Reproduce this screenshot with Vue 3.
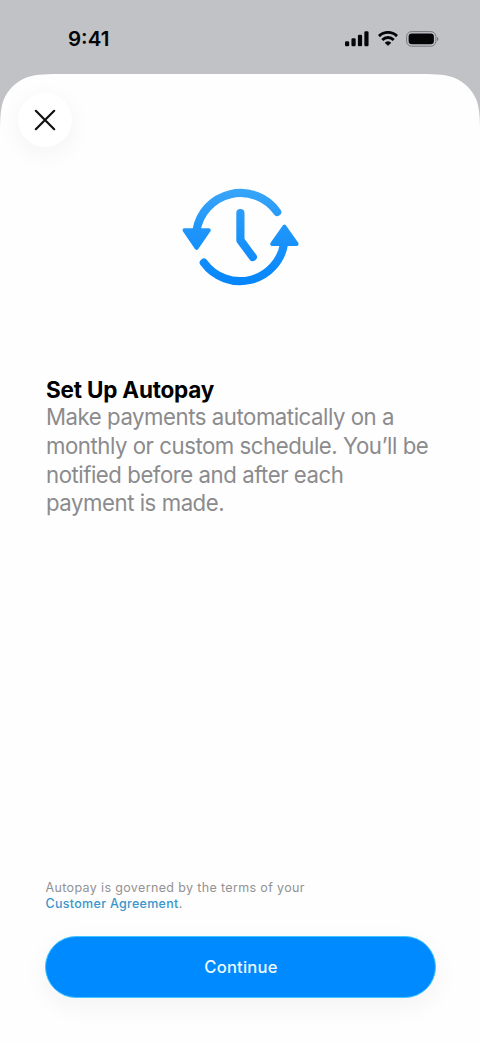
<script setup>
const bars = [5, 8, 11.5, 15]
</script>

<template>
  <main class="screen">
    <header class="status">
      <span class="time">9:41</span>
      <div class="indicators">
        <svg class="signal" width="24" height="16" viewBox="0 0 24 16">
          <rect v-for="(h, i) in bars" :key="h" :x="i * 6.45" :y="15.3 - h" width="4.2" :height="h" rx="1.3" />
        </svg>
        <svg class="wifi" width="20" height="15" viewBox="0 0 20 15">
          <g fill="none" stroke="#050507" stroke-width="2.9">
            <path d="M1 5.1a12.8 12.8 0 0 1 18 0" />
            <path d="M4.3 8.9a8 8 0 0 1 11.4 0" />
          </g>
          <path d="M7 11.7q3-2.3 6 0L10 14.6Z" fill="#050507" stroke="#050507" stroke-width=".5" stroke-linejoin="round" />
        </svg>
        <svg class="battery" width="34" height="16" viewBox="0 0 34 16">
          <rect x=".6" y=".6" width="29.3" height="14.6" rx="5" fill="none" stroke="#77777b" stroke-width="1" />
          <rect x="2.6" y="2.5" width="25.3" height="10.8" rx="3.3" />
          <path d="M31 5.9q1.4.7 1.4 2t-1.4 2Z" fill="#77777b" />
        </svg>
      </div>
    </header>

    <section class="sheet">
      <button class="close" aria-label="Close">
        <svg width="22" height="22" viewBox="0 0 22 22">
          <path d="M1.8 1.8 20.2 20.2M20.2 1.8 1.8 20.2" fill="none" stroke="#111" stroke-width="2.2" stroke-linecap="round" />
        </svg>
      </button>

      <svg class="hero" width="120" height="100" viewBox="180 187 120 100">
        <defs>
          <linearGradient id="blue" gradientUnits="userSpaceOnUse" x1="240" y1="188" x2="240" y2="286">
            <stop offset="0" stop-color="#38a5f8" />
            <stop offset=".5" stop-color="#1b93fa" />
            <stop offset="1" stop-color="#0585fb" />
          </linearGradient>
        </defs>
        <g fill="none" stroke="url(#blue)" stroke-width="8.2" stroke-linecap="round" stroke-linejoin="round">
          <path d="M277.2 212A44.7 44.7 0 0 0 196.4 231" />
          <path d="M203.8 262.7A44.7 44.7 0 0 0 284.2 243" />
          <path d="M240.4 213V240.3L252.8 257" />
        </g>
        <g fill="url(#blue)" stroke="url(#blue)" stroke-width="4" stroke-linejoin="round">
          <path d="M184.5 230.2H208.8L196.6 247.8Z" />
          <path d="M272.2 244H296.6L284.4 226.6Z" />
        </g>
      </svg>

      <div class="copy">
        <h1>Set Up Autopay</h1>
        <p>
          Make payments automatically on a<br>
          monthly or custom schedule. You’ll be<br>
          notified before and after each<br>
          payment is made.
        </p>
      </div>

      <footer>
        <p class="legal">Autopay is governed by the terms of your<br><a>Customer Agreement</a>.</p>
        <button class="continue">Continue</button>
      </footer>
    </section>
  </main>
</template>

<style>
body { background: #c1c2c6; }
</style>

<style scoped>
* { box-sizing: border-box; }
.screen {
  width: 480px;
  height: 1043px;
  display: flex;
  flex-direction: column;
  overflow: hidden;
  background: #c1c2c6;
  font-family: Inter, "Liberation Sans", sans-serif;
}
.status {
  height: 74px;
  flex: none;
  display: flex;
  justify-content: space-between;
  padding: 26px 40px 0 68px;
}
.time { font-size: 20.5px; line-height: 26px; font-weight: 600; letter-spacing: 0; color: #050507; }
.indicators { display: flex; align-items: flex-start; padding-top: 5px; fill: #050507; }
.wifi { margin-left: 9px; }
.battery { margin-left: 8px; }
.sheet {
  flex: 1;
  display: flex;
  flex-direction: column;
  background: #fefefe;
  /* continuous-curvature top corners */
  clip-path: path("M0 969V65.7C0 46.8 0 37.3 3.2 27.1C7.3 16 16 7.3 27.1 3.2C37.3 0 46.8 0 65.7 0H414.3C433.2 0 442.7 0 452.9 3.2C464 7.3 472.7 16 476.8 27.1C480 37.3 480 46.8 480 65.7V969Z");
}
button { border: 0; font-family: inherit; }
.close {
  width: 54px;
  height: 54px;
  margin: 19px 0 0 18px;
  padding: 0;
  flex: none;
  display: grid;
  place-items: center;
  border-radius: 50%;
  background: #fff;
  box-shadow: 0 6px 24px rgba(60, 30, 70, .05);
}
.hero { flex: none; margin: 40px 0 0 180px; }
.copy { margin: 89px 0 0 46px; }
h1 { margin: 0; font-size: 22.5px; line-height: 28px; font-weight: 650; letter-spacing: -.2px; color: #000; }
.copy p { margin: -.7px 0 0; font-size: 22.2px; line-height: 28.6px; color: #8b8b8d; white-space: nowrap; letter-spacing: -.46px; }
footer { margin: auto 44px 45px 45px; }
.legal { margin: 0 0 24px .5px; font-size: 12.5px; line-height: 16px; letter-spacing: .36px; color: #929294; }
.legal a { color: #3995cb; font-weight: 500; letter-spacing: .3px; }
.continue {
  display: block;
  width: 391px;
  height: 62px;
  border-radius: 31px;
  border: 1px solid #43c6ff;
  background: #008aff;
  box-shadow: 0 8px 26px rgba(60, 30, 70, .05);
  color: #eefaff;
  font-size: 16.6px;
  font-weight: 500;
  letter-spacing: .2px;
  padding: 0 0 1px 1px;
}
</style>
